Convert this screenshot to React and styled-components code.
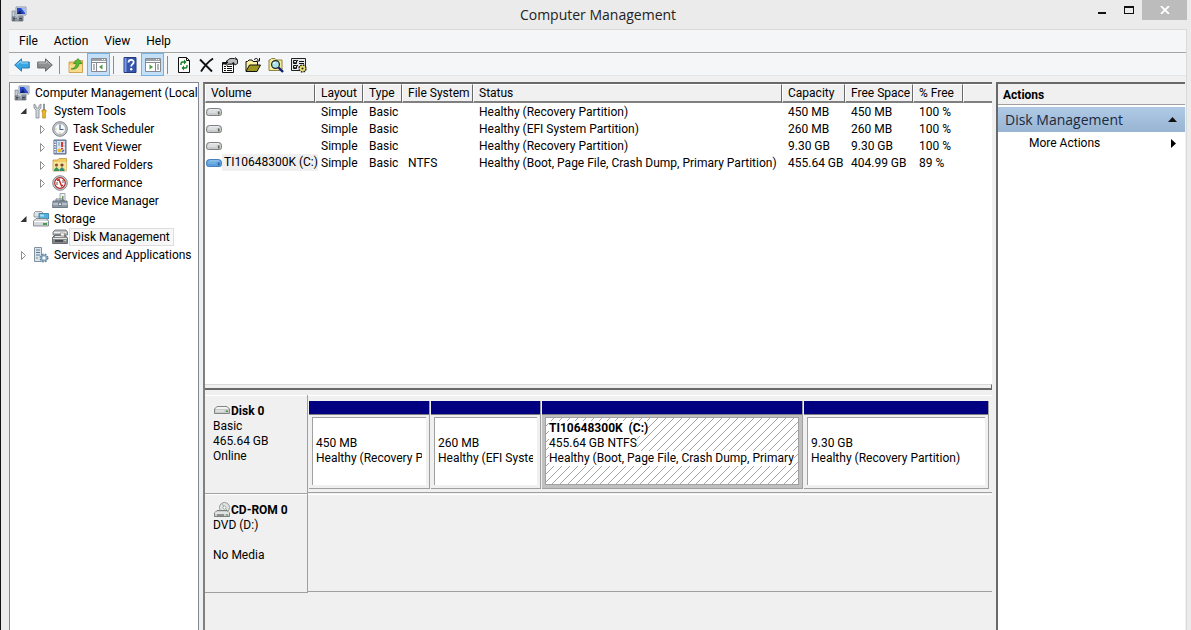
import React from 'react';
import styled, { createGlobalStyle, css } from 'styled-components';

const GlobalStyle = createGlobalStyle`
  * {
    box-sizing: border-box;
  }

  body {
    margin: 0;
    background: #ebebeb;
    color: #000;
    font-family: "Segoe UI", Roboto, "Open Sans", sans-serif;
    font-size: 12px;
    line-height: 15px;
  }

  button {
    font: inherit;
    color: inherit;
    background: none;
    border: 0;
    padding: 0;
  }

  svg {
    display: block;
    flex: none;
  }
`;

const Window = styled.div`
  display: flex;
  flex-direction: column;
  min-height: 100vh;
  border-left: 1px solid #111;
  padding: 0 4px 0 8px;
`;

const TitleBar = styled.header`
  display: grid;
  grid-template-columns: 1fr auto 1fr;
  height: 29px;
`;

const TitleIcon = styled.span`
  padding: 6px 2px;
`;

const Title = styled.h1`
  margin: 0;
  font-family: "Segoe UI", "Open Sans", sans-serif;
  font-size: 14px;
  font-weight: 400;
  line-height: 29px;
  color: #222;
`;

const WindowControls = styled.div`
  display: flex;
  justify-content: flex-end;
  align-items: flex-start;
`;

const ControlButton = styled.button`
  display: flex;
  align-items: center;
  justify-content: center;
  width: ${(props) => (props.$close ? 45 : 27)}px;
  height: 20px;
  background: ${(props) => (props.$close ? '#bcbcbc' : 'transparent')};
`;

const Client = styled.div`
  flex: 1;
  display: flex;
  flex-direction: column;
  background: #f0f0f0;
  border: 1px solid #dadada;
  border-width: 1px 1px 0 0;
`;

const MenuBar = styled.nav`
  display: flex;
  height: 23px;
  padding-left: 2px;
  background: #f5f6f7;
  border-bottom: 1px solid #a5a5a5;
`;

const MenuItem = styled.button`
  padding: 0 8px;
  line-height: 22px;
`;

const ToolBar = styled.div`
  display: flex;
  height: 23px;
  padding-left: 1px;
  background: #f5f6f7;
  border-bottom: 1px solid #e6e6e6;
`;

const ToolButton = styled.button`
  display: flex;
  align-items: center;
  justify-content: center;
  width: 23px;
  height: 23px;
  ${(props) =>
    props.$active &&
    css`
      background: #c4e0f8;
      border: 1px solid #72b2e4;
    `}
`;

const Separator = styled.span`
  width: 8px;
  height: 18px;
  margin-top: 3px;
  background: linear-gradient(#8c8c8c, #8c8c8c) 3px 0 / 1px 100% no-repeat;
`;

const Panes = styled.main`
  flex: 1;
  display: grid;
  grid-template-columns: 190px minmax(0, 1fr) 189px;
  gap: 4px;
  padding: 6px 1px 0 0;
`;

const TreePane = styled.aside`
  overflow: hidden;
  background: #fff;
  border: 1px solid #828790;
  border-bottom: 0;
  padding: 1px 0 0 4px;
`;

const TreeList = styled.ul`
  list-style: none;
  margin: 0;
  padding: 0 0 0 19px;
`;

const TreeRow = styled.div`
  display: flex;
  align-items: center;
  height: 18px;
  white-space: nowrap;
`;

const Expander = styled.button`
  display: flex;
  flex: none;
  align-items: center;
  width: 19px;
  height: 18px;
  margin-left: -19px;
  padding-left: 6px;
`;

const TreeLabel = styled.span`
  height: 18px;
  margin-left: 1px;
  padding: 0 3px;
  line-height: 16px;
  border: 1px solid ${(props) => (props.$selected ? '#dedede' : 'transparent')};
  background: ${(props) => (props.$selected ? '#f7f7f7' : 'transparent')};
`;

const CenterPane = styled.section`
  display: flex;
  flex-direction: column;
  min-width: 0;
  border-top: 2px solid #696969;
  border-left: 2px solid #808080;
`;

const VolumePane = styled.div`
  flex: 0 0 56%;
  display: flex;
  flex-direction: column;
  overflow: hidden;
  background: #fff;
`;

const Splitter = styled.div`
  height: 6px;
  margin-top: auto;
  background: #f0f0f0;
  border: solid #696969;
  border-width: 0 1px 2px 0;
  border-top: 1px solid #d8d8d8;
`;

const VolumeTable = styled.table`
  width: 100%;
  table-layout: fixed;
  border-collapse: separate;
  border-spacing: 0;
  white-space: nowrap;
`;

const HeadCell = styled.th`
  height: 19px;
  padding: 1px 0 0 5px;
  font-weight: 400;
  text-align: left;
  line-height: 15px;
  background: #f0f0f0;
  border-top: 1px solid #fff;
  border-left: 1px solid #fff;
  border-right: ${(props) => (props.$last ? '0' : '1px solid #696969')};
  border-bottom: 2px solid #808080;
`;

const Cell = styled.td`
  height: 17px;
  padding: ${(props) => (props.$first ? '0 0 0 1px' : '2px 0 0 6px')};
  line-height: 15px;
`;

const VolumeName = styled.div`
  display: flex;
  align-items: center;
`;

const VolumeLabel = styled.span`
  padding-left: 2px;
  line-height: 17px;
  background: #f0f0f0;
`;

const DiskPane = styled.div`
  flex: 1;
  padding-top: 5px;
`;

const DiskRow = styled.div`
  display: grid;
  grid-template-columns: 103px minmax(0, 1fr);
  height: 99px;
`;

const DiskInfo = styled.div`
  height: 99px;
  padding: 9px 0 0 8px;
  border: solid #a0a0a0;
  border-width: 0 1px 1px 0;
  box-shadow: inset 0 1px #fff;
`;

const DiskTitle = styled.div`
  display: flex;
  align-items: center;
  gap: 1px;
  height: 15px;
  padding-left: 1px;
  font-weight: 700;
`;

const DiskLine = styled.div`
  height: 15px;
`;

const PartitionStrip = styled.div`
  display: grid;
  grid-template-columns: 122fr 111fr 262fr 186fr;
  height: 98px;
  padding: 6px 2px 3px 1px;
  border-bottom: 1px solid #a0a0a0;
  box-shadow: inset 0 1px #fff;
`;

const Partition = styled.div`
  display: flex;
  flex-direction: column;
  min-width: 0;
  border: solid #a0a0a0;
  border-width: 0 1px 1px 0;
  margin-right: 1px;
`;

const PartitionBar = styled.div`
  height: 14px;
  background: #000080;
  border-bottom: 1px solid #808080;
`;

const PartitionFrame = styled.div`
  flex: 1;
  display: flex;
  padding: 2px 3px 3px;
  background: ${(props) => (props.$selected ? '#c0c0c0' : '#f0f0f0')};
`;

const PartitionBody = styled.div`
  flex: 1;
  min-width: 0;
  overflow: hidden;
  padding: 3px 4px 0 3px;
  border: solid #a0a0a0;
  border-width: ${(props) => (props.$selected ? '1px' : '1px 0 0 1px')};
  white-space: nowrap;
  background: #fff;
  ${(props) =>
    props.$selected &&
    css`
      background: linear-gradient(135deg, #fff 45%, #a6a6a6 47%, #a6a6a6 53%, #fff 55%) 0 0 / 8px 8px;
    `}
`;

const PartitionLine = styled.div`
  height: 15px;
  overflow: hidden;
  font-weight: ${(props) => (props.$bold ? 700 : 400)};

  span {
    display: inline-block;
    background: #fff;
  }
`;

const ActionsPane = styled.aside`
  background: #fff;
  border-top: 2px solid #696969;
  border-left: 2px solid #696969;
`;

const ActionsTitle = styled.h2`
  height: 21px;
  margin: 0 0 2px;
  padding-left: 5px;
  font-size: 12px;
  line-height: 22px;
  background: #f0f0f0;
  border-bottom: 1px solid #a0a0a0;
`;

const ActionsGroup = styled.button`
  display: flex;
  align-items: center;
  justify-content: space-between;
  width: 100%;
  height: 25px;
  padding: 0 8px 0 7px;
  font-family: "Segoe UI", "Open Sans", sans-serif;
  font-size: 14px;
  color: #1a2a3e;
  background: linear-gradient(#b0cae6, #98b4d2);
`;

const ActionsItem = styled.button`
  display: flex;
  align-items: center;
  justify-content: space-between;
  width: 100%;
  height: 22px;
  padding: 0 9px 0 31px;
`;

const Icon = ({ children, width = 16, height = 16, ...rest }) => (
  <svg width={width} height={height} viewBox={`0 0 ${width} ${height}`} aria-hidden="true" {...rest}>
    {children}
  </svg>
);

const ComputerIcon = () => (
  <Icon>
    <path d="M5 1h10v8H5z" fill="#dfe5ee" stroke="#8d99ab" />
    <path d="M6 2h8v6H6z" fill="#2747c4" />
    <path d="M10 2h4v5z" fill="#9db8f4" />
    <path d="M6 8l3-4 2 4z" fill="#14226e" />
    <path d="M8 9h4l1 2H7z" fill="#a4abb5" />
    <path d="M1 5h3v6H1z" fill="#c3cad3" stroke="#7c8794" strokeWidth=".7" />
    <path d="M1 11h11v4H1z" fill="#8f9aa6" stroke="#59636e" strokeWidth=".7" />
    <path d="M2 12.5h4M8 12.5h3M2 14h9" stroke="#3f474f" />
    <path d="M5 11v4M7 11v4" stroke="#dfe4e8" strokeWidth=".7" />
  </Icon>
);

const ToolsIcon = () => (
  <Icon>
    <path d="M1 1v4l2 2v8h3V7l2-2V1L6 2.500V5H3V2.500z" fill="#d4d8dc" stroke="#7f868e" strokeWidth=".8" />
    <path d="M10.500 1h1v6h-1z" fill="#a5abb2" stroke="#6c737b" strokeWidth=".6" />
    <path d="M9 7h4v2l-.7 1v5H9.700v-5L9 9z" fill="#f4bd21" stroke="#a77a08" strokeWidth=".7" />
  </Icon>
);

const ClockIcon = () => (
  <Icon>
    <circle cx="8" cy="8" r="7.300" fill="#c9cdd2" stroke="#71777e" strokeWidth=".9" />
    <circle cx="8" cy="8" r="5.500" fill="#f8f9fa" stroke="#949aa1" strokeWidth=".7" />
    <path d="M8 3.500V8.500h3.500" fill="none" stroke="#3c5c86" strokeWidth="1.100" />
    <path d="M8 12.500v-1M3.500 8h1" stroke="#d49a2c" />
  </Icon>
);

const EventIcon = () => (
  <Icon>
    <path d="M2 1h12v14H2z" fill="#8c9cbd" stroke="#596b8c" />
    <path d="M5 2h8v12H5z" fill="#dfe5ef" />
    <path d="M2 3h2M2 5.500h2M2 8h2M2 10.500h2M2 13h2" stroke="#eef2f8" />
    <path d="M6 4h2M6 6h2M11.500 4h1M11.500 7h1" stroke="#8493ae" />
    <path d="M9 3h2v5H9z" fill="#d03a30" />
    <path d="M9 9h2v1.500H9z" fill="#d03a30" />
    <circle cx="7.500" cy="11.500" r="2" fill="#ecbb2d" />
    <path d="M10 13l2-2" stroke="#3767b6" strokeWidth="1.500" />
  </Icon>
);

const SharedIcon = () => (
  <Icon>
    <path d="M1 3h5l1-1.500h7.500V14H1z" fill="#f0cd67" stroke="#c29a37" strokeWidth=".8" />
    <path d="M1.500 5h13v9h-13z" fill="#f9e39a" />
    <circle cx="4.500" cy="8" r="1.600" fill="#8c4f2c" />
    <path d="M2 14v-1.500l2.500-2.500 2.500 2.500V14z" fill="#2e9461" />
    <circle cx="10" cy="8" r="1.600" fill="#74462b" />
    <path d="M7.500 14v-1.500L10 10l2.500 2.500V14z" fill="#2e8a78" />
  </Icon>
);

const PerformanceIcon = () => (
  <Icon>
    <circle cx="8" cy="8" r="7.300" fill="#d0d3d6" stroke="#777c82" strokeWidth=".9" />
    <circle cx="8" cy="8" r="5.300" fill="#fff" stroke="#b32a25" strokeWidth="1.200" />
    <path d="M5 5.500l2-1 2.500 6.500 1.500-1" fill="none" stroke="#c22720" strokeWidth="1.400" />
    <path d="M5 10V7M11 8V5" stroke="#6a5053" />
  </Icon>
);

const DeviceIcon = () => (
  <Icon>
    <path d="M8 .5h5v7H8z" fill="#eef1f4" stroke="#8b949e" strokeWidth=".8" />
    <path d="M10 3h1.500v5H10z" fill="#6b9c53" />
    <path d="M4 6h7v2H4z" fill="none" stroke="#6f7a86" />
    <path d="M1 8h14l.5 6.500H.5z" fill="#8d9aa8" stroke="#596674" strokeWidth=".8" />
    <path d="M1 11h14" stroke="#dfe4e9" />
    <path d="M6.500 10h3v2.500h-3z" fill="#e4e7ea" stroke="#4d5863" strokeWidth=".6" />
  </Icon>
);

const StorageIcon = () => (
  <Icon>
    <path d="M1 2l1.500-1.500h6L10 2v4H1z" fill="#dfe2e5" stroke="#858c93" strokeWidth=".8" />
    <path d="M6 2.500h9.500v5.500H6z" fill="#53b0dc" stroke="#30779d" strokeWidth=".8" />
    <path d="M7 3.500h4v2H7z" fill="#a9def4" />
    <path d="M.5 10L3 7.500h10l2.500 2.500v5H.5z" fill="#d5d8db" stroke="#737a81" strokeWidth=".8" />
    <path d="M1 10.500h14" stroke="#fff" />
    <path d="M10 12h4v2h-4z" fill="#4a9c4c" />
  </Icon>
);

const DiskManagementIcon = () => (
  <Icon>
    <path d="M1 3l2-2h11l1.500 2v3H1z" fill="#bcbfc2" stroke="#666b70" strokeWidth=".8" />
    <path d="M2 3.500h12" stroke="#f0f0f0" />
    <path d="M0 9l3-3h10l2.500 3v5.500H.5z" fill="#85898d" stroke="#54585c" strokeWidth=".8" />
    <path d="M3 7.500h9M1 9.500h14" stroke="#e8e8e8" />
    <path d="M3 12h8" stroke="#36393c" strokeWidth="1.500" />
    <path d="M12.500 11.500h1.500" stroke="#c8e2bc" />
    <path d="M8 4h5l-1 3H9z" fill="#f4f4f4" stroke="#777" strokeWidth=".6" />
  </Icon>
);

const ServicesIcon = () => (
  <Icon>
    <path d="M1.500 .5h7v14h-7z" fill="#dce5ec" stroke="#8292a1" />
    <path d="M3 3h4M3 5.500h4M3 8h4" stroke="#57788f" />
    <path d="M3 11h2" stroke="#57a55b" />
    <circle cx="11" cy="11" r="3.500" fill="#b4c9da" stroke="#6288a5" strokeWidth="2" strokeDasharray="1.600 1.200" />
    <circle cx="11" cy="11" r="2.800" fill="#b4c9da" stroke="#6b8ca7" strokeWidth=".8" />
    <circle cx="11" cy="11" r="1.200" fill="#fff" />
  </Icon>
);

const DriveIcon = ({ blue }) => (
  <Icon height={10}>
    <path
      d="M.5 4.500Q.5 1.500 3.500 1.500h9q3 0 3 3v2q0 2-2 2h-11q-2 0-2-2z"
      fill={blue ? '#5b9fdc' : '#c9cbcd'}
      stroke={blue ? '#3b78b4' : '#717477'}
      strokeWidth=".9"
    />
    <path d="M2 3.500q1-1.300 2.500-1.300h7q1.500 0 2.500 1.300z" fill={blue ? '#9ccbf2' : '#f6f6f6'} />
    <path d="M2 5h8.500" stroke={blue ? '#86bdec' : '#f0f0f0'} />
    <path d="M12 4.500h1.500v3H12z" fill={blue ? '#2d6299' : '#55664e'} />
  </Icon>
);

const DiskIcon = () => (
  <Icon height={10}>
    <path d="M.5 3L3 .5h10L15.500 3v4.500H.5z" fill="#c9cbcb" stroke="#777b7b" strokeWidth=".9" />
    <path d="M1.500 3L3.500 1h9L14.500 3z" fill="#f2f3f3" />
    <path d="M2 5h8" stroke="#eee" />
    <path d="M12 4.500h2v1.500h-2z" fill="#459545" />
  </Icon>
);

const CdIcon = () => (
  <Icon>
    <circle cx="10.500" cy="5.500" r="5" fill="#dfe3e2" stroke="#8b9190" strokeWidth=".9" />
    <path d="M10.500 5.500L8 1.500M10.500 5.500l3.500 3.500" stroke="#99ba9a" />
    <circle cx="10.500" cy="5.500" r="1.500" fill="#fff" stroke="#888" strokeWidth=".7" />
    <path d="M.5 11L3 8.500h10l2.500 2.500v3.500H.5z" fill="#cdd0ce" stroke="#707573" strokeWidth=".9" />
    <path d="M1 11h14" stroke="#f7f7f7" />
    <path d="M3 13h7" stroke="#4d5250" />
    <path d="M12 13h2" stroke="#3a9140" />
  </Icon>
);

const ArrowIcon = ({ back }) => (
  <Icon>
    <path
      d={back ? 'M.7 8L7.500 1.800V5h7.800v6H7.500v3.200z' : 'M15.300 8L8.500 1.800V5H.7v6h7.800v3.200z'}
      fill={back ? '#39a6e4' : '#8f8f8f'}
      stroke={back ? '#2873a8' : '#606060'}
      strokeWidth=".9"
    />
    <path d={back ? 'M3 7.500L7 4v2h7' : 'M1.500 6h8V4l3.500 3.500'} fill="none" stroke={back ? '#9bdcfa' : '#c4c4c4'} />
  </Icon>
);

const UpFolderIcon = () => (
  <Icon>
    <path d="M1 5h5l1-1.500h7.500v12H1z" fill="#efc863" stroke="#c1963b" strokeWidth=".8" />
    <path d="M1.500 7.500h12.500v7.500H1.500z" fill="#f8dc8c" />
    <path d="M3 12c3.500-.5 5-2.500 5.200-5.500H5.500L10 1.500 14 6.500h-3C11 10 8 12.800 3 12z" fill="#58bb36" stroke="#34871c" strokeWidth=".7" />
  </Icon>
);

const PaneIcon = ({ right }) => (
  <Icon>
    <path d="M.5 1.500h15v13H.5z" fill="#fff" stroke="#86898d" />
    <path d="M1 2h14v2H1z" fill="#9aa1a8" />
    <path d="M11 2.500h1M13 2.500h1" stroke="#fff" />
    <path d="M1 5.500h14" stroke="#86898d" />
    <path d={right ? 'M10.500 6v8' : 'M5.500 6v8'} stroke="#86898d" />
    <path d={right ? 'M12 8h2M12 10h2M12 12h2' : 'M2 8h2M2 10h2M2 12h2'} stroke="#69727b" />
    <path d={right ? 'M4.500 7.500l3.500 2.500-3.500 2.500z' : 'M11.500 7.500L8 10l3.500 2.500z'} fill="#4c9b45" />
  </Icon>
);

const HelpIcon = () => (
  <Icon>
    <path d="M2 .5h12v15H2z" fill="#3656ad" stroke="#26387c" />
    <path d="M2.500 1h2v14h-2z" fill="#7c9ae2" />
    <path d="M6.500 5.500c0-3.500 5.500-3.300 5.200-.2-.2 2-2.500 1.800-2.500 4.200" fill="none" stroke="#fff" strokeWidth="1.700" />
    <circle cx="9.200" cy="12.200" r="1.200" fill="#fff" />
  </Icon>
);

const RefreshIcon = () => (
  <Icon>
    <path d="M2.500 .5h8l3 3v12h-11z" fill="#fff" stroke="#111" />
    <path d="M10.500 .5v3h3" fill="none" stroke="#111" />
    <path d="M5 8V6.500q0-1.500 1.500-1.500H9M11 8v1.500Q11 11 9.500 11H7" fill="none" stroke="#168022" strokeWidth="1.400" />
    <path d="M8 2.500L10.500 5 8 7.500zM8 8.500L5.500 11 8 13.500z" fill="#168022" />
  </Icon>
);

const DeleteIcon = () => (
  <Icon>
    <path d="M1 2.500l12 12M14 1.500c-4.500 3-8.500 7.500-12 13" fill="none" stroke="#111" strokeWidth="1.900" />
  </Icon>
);

const PropertiesIcon = () => (
  <Icon>
    <path d="M.5 5.500h11v10H.5z" fill="#fff" stroke="#111" />
    <path d="M.5 5.500h11v2H.5z" fill="#111" />
    <path d="M2 9.500h2M5 9.500h5M2 11.500h2M5 11.500h5M2 13.500h2M5 13.500h5" stroke="#111" />
    <path d="M4 4.500L8 1.500h4.500L15.500 3v3.500L13 8l-1.500-2.500L9.500 7H6.500L5 8.500 4 7.500l2-2.500z" fill="#b9b9b9" stroke="#111" strokeWidth=".9" />
    <path d="M13 .5l2.500 2" stroke="#111" />
  </Icon>
);

const OpenIcon = () => (
  <Icon>
    <path d="M1 14V4.500h1.500L4 3h3l1 1.500h4.500V8" fill="#fbf0a0" stroke="#111" />
    <path d="M1 14.500L4.500 8H15.500l-3.500 6.500z" fill="#9c9520" stroke="#111" />
    <path d="M9 2.500q2.500-2.500 4.500.5M14.500 1v3h-3" fill="none" stroke="#111" />
  </Icon>
);

const SearchIcon = () => (
  <Icon>
    <path d="M1 13.500V3h1l1.500-1.500h3.500L8.500 3h5.500v10.500z" fill="#f6ec9c" stroke="#8a8440" />
    <circle cx="7.500" cy="7.500" r="3.900" fill="#a5e5ea" stroke="#222" strokeWidth="1.200" />
    <path d="M5.500 7q.5-1.500 2-1.500" fill="none" stroke="#fff" />
    <path d="M10.500 10.500l4.500 4.500" stroke="#111d78" strokeWidth="2.400" />
  </Icon>
);

const SettingsIcon = () => (
  <Icon>
    <path d="M.5 1.500h14v12H.5z" fill="#e9e9e9" stroke="#222" />
    <path d="M2.500 3.500h3v3h-3zM2.500 8.500h3v3h-3z" fill="#fff" stroke="#111" />
    <path d="M3 5l1.500 1L7 3M3 10l1.500 1L7 8M8 4.500h5M8 6.500h5M8 9.500h2" fill="none" stroke="#111" />
    <circle cx="11.500" cy="11.500" r="3.200" fill="#e8dd76" stroke="#222" strokeWidth="2" strokeDasharray="1.500 1" />
    <circle cx="11.500" cy="11.500" r="2.800" fill="#e8dd76" />
    <circle cx="11.500" cy="11.500" r="1" fill="#222" />
  </Icon>
);

const tools = [
  { label: 'Back', icon: <ArrowIcon back /> },
  { label: 'Forward', icon: <ArrowIcon /> },
  null,
  { label: 'Up one level', icon: <UpFolderIcon /> },
  { label: 'Show or hide console tree', icon: <PaneIcon />, active: true },
  null,
  { label: 'Help', icon: <HelpIcon /> },
  { label: 'Show or hide action pane', icon: <PaneIcon right />, active: true },
  null,
  { label: 'Refresh', icon: <RefreshIcon /> },
  { label: 'Delete', icon: <DeleteIcon /> },
  { label: 'Properties', icon: <PropertiesIcon /> },
  { label: 'Open', icon: <OpenIcon /> },
  { label: 'Find', icon: <SearchIcon /> },
  { label: 'Settings', icon: <SettingsIcon /> },
];

const tree = [
  {
    label: 'System Tools',
    icon: <ToolsIcon />,
    state: 'open',
    children: [
      { label: 'Task Scheduler', icon: <ClockIcon />, state: 'closed' },
      { label: 'Event Viewer', icon: <EventIcon />, state: 'closed' },
      { label: 'Shared Folders', icon: <SharedIcon />, state: 'closed' },
      { label: 'Performance', icon: <PerformanceIcon />, state: 'closed' },
      { label: 'Device Manager', icon: <DeviceIcon /> },
    ],
  },
  {
    label: 'Storage',
    icon: <StorageIcon />,
    state: 'open',
    children: [{ label: 'Disk Management', icon: <DiskManagementIcon />, selected: true }],
  },
  { label: 'Services and Applications', icon: <ServicesIcon />, state: 'closed' },
];

const columns = [
  { name: 'Volume', width: 110 },
  { name: 'Layout', width: 48 },
  { name: 'Type', width: 39 },
  { name: 'File System', width: 71 },
  { name: 'Status', width: 309 },
  { name: 'Capacity', width: 63 },
  { name: 'Free Space', width: 68 },
  { name: '% Free', width: 50 },
];

const volumes = [
  { name: '', fs: '', status: 'Healthy (Recovery Partition)', capacity: '450 MB', free: '450 MB', percent: '100 %' },
  { name: '', fs: '', status: 'Healthy (EFI System Partition)', capacity: '260 MB', free: '260 MB', percent: '100 %' },
  { name: '', fs: '', status: 'Healthy (Recovery Partition)', capacity: '9.30 GB', free: '9.30 GB', percent: '100 %' },
  {
    name: 'TI10648300K (C:)',
    fs: 'NTFS',
    status: 'Healthy (Boot, Page File, Crash Dump, Primary Partition)',
    capacity: '455.64 GB',
    free: '404.99 GB',
    percent: '89 %',
  },
];

const partitions = [
  { name: '\u00a0', size: '450 MB', status: 'Healthy (Recovery Partition)' },
  { name: '\u00a0', size: '260 MB', status: 'Healthy (EFI System Partition)' },
  {
    name: 'TI10648300K\u00a0 (C:)',
    size: '455.64 GB NTFS',
    status: 'Healthy (Boot, Page File, Crash Dump, Primary Partition)',
    selected: true,
  },
  { name: '\u00a0', size: '9.30 GB', status: 'Healthy (Recovery Partition)' },
];

const TreeNode = ({ node }) => (
  <li>
    <TreeRow>
      {node.state && (
        <Expander aria-label={`Toggle ${node.label}`} aria-expanded={node.state === 'open'}>
          <Icon width={8} height={10}>
            {node.state === 'open' ? (
              <path d="M6.500 2v6H.5z" fill="#333" />
            ) : (
              <path d="M1.500 1.500l4 4-4 4z" fill="#fff" stroke="#8f8f8f" />
            )}
          </Icon>
        </Expander>
      )}
      {node.icon}
      <TreeLabel $selected={node.selected}>{node.label}</TreeLabel>
    </TreeRow>
    {node.children && (
      <TreeList>
        {node.children.map((child) => (
          <TreeNode key={child.label} node={child} />
        ))}
      </TreeList>
    )}
  </li>
);

const App = () => {
  return (
    <>
      <GlobalStyle />
      <Window>
        <TitleBar>
          <TitleIcon>
            <ComputerIcon />
          </TitleIcon>
          <Title>Computer Management</Title>
          <WindowControls>
            <ControlButton aria-label="Minimize">
              <Icon width={10} height={10}>
                <path d="M1 7h8v2H1z" fill="#111" />
              </Icon>
            </ControlButton>
            <ControlButton aria-label="Maximize">
              <Icon width={10} height={8}>
                <path d="M0 0h10v8H0zM1 2v5h8V2z" fill="#111" fillRule="evenodd" />
              </Icon>
            </ControlButton>
            <ControlButton aria-label="Close" $close>
              <Icon width={10} height={8}>
                <path d="M1 0l8 8M9 0L1 8" stroke="#fff" strokeWidth="1.800" />
              </Icon>
            </ControlButton>
          </WindowControls>
        </TitleBar>

        <Client>
          <MenuBar>
            <MenuItem>File</MenuItem>
            <MenuItem>Action</MenuItem>
            <MenuItem>View</MenuItem>
            <MenuItem>Help</MenuItem>
          </MenuBar>

          <ToolBar>
            {tools.map((tool, index) =>
              tool ? (
                <ToolButton key={tool.label} aria-label={tool.label} $active={tool.active}>
                  {tool.icon}
                </ToolButton>
              ) : (
                <Separator key={index} />
              )
            )}
          </ToolBar>

          <Panes>
            <TreePane>
              <TreeRow>
                <ComputerIcon />
                <TreeLabel>Computer Management (Local)</TreeLabel>
              </TreeRow>
              <TreeList>
                {tree.map((node) => (
                  <TreeNode key={node.label} node={node} />
                ))}
              </TreeList>
            </TreePane>

            <CenterPane>
              <VolumePane>
                <VolumeTable>
                  <colgroup>
                    {columns.map((column) => (
                      <col key={column.name} width={column.width} />
                    ))}
                    <col />
                  </colgroup>
                  <thead>
                    <tr>
                      {columns.map((column) => (
                        <HeadCell key={column.name}>{column.name}</HeadCell>
                      ))}
                      <HeadCell $last />
                    </tr>
                  </thead>
                  <tbody>
                    {volumes.map((volume, index) => (
                      <tr key={index}>
                        <Cell $first>
                          <VolumeName>
                            <DriveIcon blue={volume.name !== ''} />
                            {volume.name && <VolumeLabel>{volume.name}</VolumeLabel>}
                          </VolumeName>
                        </Cell>
                        <Cell>Simple</Cell>
                        <Cell>Basic</Cell>
                        <Cell>{volume.fs}</Cell>
                        <Cell>{volume.status}</Cell>
                        <Cell>{volume.capacity}</Cell>
                        <Cell>{volume.free}</Cell>
                        <Cell>{volume.percent}</Cell>
                        <Cell />
                      </tr>
                    ))}
                  </tbody>
                </VolumeTable>
                <Splitter />
              </VolumePane>

              <DiskPane>
                <DiskRow>
                  <DiskInfo>
                    <DiskTitle>
                      <DiskIcon />
                      Disk 0
                    </DiskTitle>
                    <DiskLine>Basic</DiskLine>
                    <DiskLine>465.64 GB</DiskLine>
                    <DiskLine>Online</DiskLine>
                  </DiskInfo>
                  <PartitionStrip>
                    {partitions.map((partition, index) => (
                      <Partition key={index}>
                        <PartitionBar />
                        <PartitionFrame $selected={partition.selected}>
                          <PartitionBody $selected={partition.selected}>
                            <PartitionLine $bold>
                              <span>{partition.name}</span>
                            </PartitionLine>
                            <PartitionLine>
                              <span>{partition.size}</span>
                            </PartitionLine>
                            <PartitionLine>
                              <span>{partition.status}</span>
                            </PartitionLine>
                          </PartitionBody>
                        </PartitionFrame>
                      </Partition>
                    ))}
                  </PartitionStrip>
                </DiskRow>
                <DiskRow>
                  <DiskInfo>
                    <DiskTitle>
                      <CdIcon />
                      CD-ROM 0
                    </DiskTitle>
                    <DiskLine>DVD (D:)</DiskLine>
                    <DiskLine />
                    <DiskLine>No Media</DiskLine>
                  </DiskInfo>
                  <PartitionStrip />
                </DiskRow>
              </DiskPane>
            </CenterPane>

            <ActionsPane>
              <ActionsTitle>Actions</ActionsTitle>
              <ActionsGroup>
                Disk Management
                <Icon width={9} height={5}>
                  <path d="M0 5l4.500-5L9 5z" fill="#111" />
                </Icon>
              </ActionsGroup>
              <ActionsItem>
                More Actions
                <Icon width={5} height={9}>
                  <path d="M0 0l5 4.500L0 9z" fill="#000" />
                </Icon>
              </ActionsItem>
            </ActionsPane>
          </Panes>
        </Client>
      </Window>
    </>
  );
};

export default App;
